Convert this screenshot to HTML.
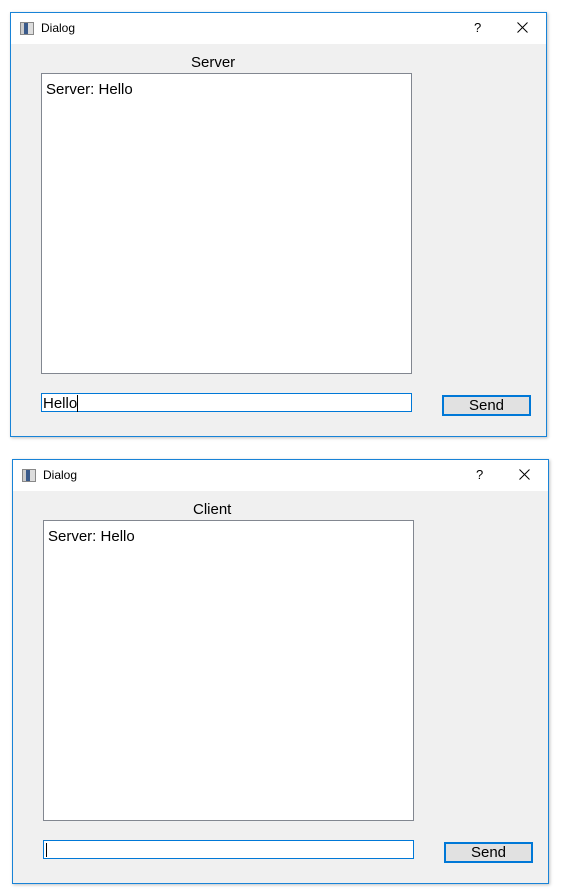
<!DOCTYPE html><html><head><style>
body{margin:0;width:562px;height:896px;background:#fff;position:relative;font-family:"Liberation Sans",sans-serif;overflow:hidden}
.w{position:absolute;width:535px;height:423px;border:1px solid #1883d7;background:#f0f0f0;box-shadow:1px 1px 3px rgba(0,0,0,.25)}
.tb{position:absolute;left:0;top:0;right:0;height:31px;background:#fff}
.ic{position:absolute;left:9px;top:9px;width:12px;height:11px;border:1px solid #888;background:linear-gradient(90deg,#ccc 0 3px,#3a5a8a 3px 7px,#ddd 7px)}
.tt{position:absolute;left:30px;top:8px;font-size:12px;color:#000}
.q{position:absolute;left:463px;top:7px;font-size:13px}
.x{position:absolute;left:506px;top:9px}
.lb{position:absolute;top:41px;font-size:15px;color:#000}
.te{position:absolute;left:30px;top:60px;width:369px;height:299px;border:1px solid #828790;background:#fff;font-size:15px}
.te span{position:absolute;left:4px;top:7px}
.le{position:absolute;left:30px;top:380px;width:369px;height:17px;border:1px solid #0078d7;background:#fff;font-size:15px}
.bt{position:absolute;left:431px;top:382px;width:85px;height:17px;border:2px solid #0078d7;background:#e1e1e1;font-size:15px;text-align:center;line-height:17px}
</style></head><body>
<div class="w" style="left:10px;top:12px">
<div class="tb"><div class="ic"></div><div class="tt">Dialog</div><div class="q">?</div><svg class="x" width="11" height="11"><path d="M0.5 0.5L10.5 10.5M10.5 0.5L0.5 10.5" stroke="#000" stroke-width="1"/></svg></div>
<div class="lb" style="left:180px">Server</div>
<div class="te"><span>Server: Hello</span></div>
<div class="le"><span style="position:absolute;left:1px;top:1px;border-right:1px solid #000;line-height:17px">Hello</span></div>
<div class="bt">Send</div>
</div>
<div class="w" style="left:12px;top:459px">
<div class="tb"><div class="ic"></div><div class="tt">Dialog</div><div class="q">?</div><svg class="x" width="11" height="11"><path d="M0.5 0.5L10.5 10.5M10.5 0.5L0.5 10.5" stroke="#000" stroke-width="1"/></svg></div>
<div class="lb" style="left:180px">Client</div>
<div class="te"><span>Server: Hello</span></div>
<div class="le"><span style="position:absolute;left:2px;top:2px;width:1px;height:14px;background:#000"></span></div>
<div class="bt">Send</div>
</div>
</body></html>
